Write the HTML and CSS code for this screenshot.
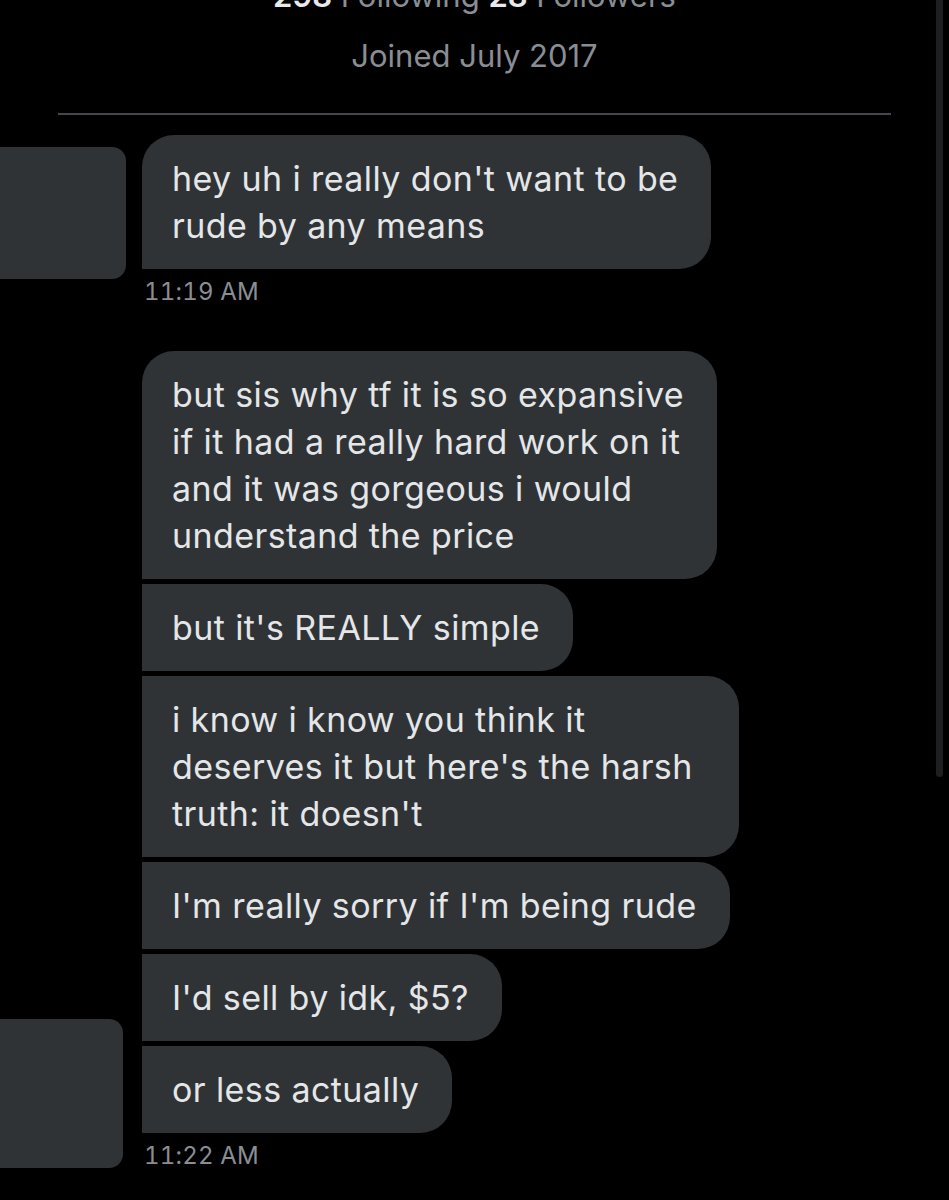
FILE: index.html
```html
<!DOCTYPE html>
<html lang="en">
<head>
<meta charset="utf-8">
<title>Messages</title>
<link rel="stylesheet" href="styles.css">
</head>
<body>
<div class="screen">
  <header class="profile">
    <p class="stats"><b>298</b> Following <b>28</b> Followers</p>
    <p class="joined">Joined July 2017</p>
  </header>
  <hr class="divider">

  <section class="thread">
    <div class="group">
      <div class="avatar-col"><div class="avatar avatar-a"></div></div>
      <div class="messages">
        <div class="bubble first">hey uh i really don't want to be<br>rude by any means</div>
        <div class="time">11:19 AM</div>
      </div>
    </div>

    <div class="group group-b">
      <div class="avatar-col"><div class="avatar avatar-b"></div></div>
      <div class="messages">
        <div class="bubble first">but sis why tf it is so expansive<br>if it had a really hard work on it<br>and it was gorgeous i would<br>understand the price</div>
        <div class="bubble">but it's REALLY simple</div>
        <div class="bubble wide">i know i know you think it<br>deserves it but here's the harsh<br>truth: it doesn't</div>
        <div class="bubble">I'm really sorry if I'm being rude</div>
        <div class="bubble">I'd sell by idk, $5?</div>
        <div class="bubble">or less actually</div>
        <div class="time">11:22 AM</div>
      </div>
    </div>
  </section>

  <div class="scroll-indicator"></div>
</div>
</body>
</html>
```

FILE: styles.css
```css
html, body {
  margin: 0;
  padding: 0;
  background: #000;
}

body {
  font-family: Inter, "Noto Sans", "Liberation Sans", sans-serif;
  color: #e4e6e8;
}

.screen {
  position: relative;
  width: 949px;
  height: 1200px;
  overflow: hidden;
}

/* profile footer above the thread */
.profile {
  text-align: center;
  color: #8a8e93;
  font-size: 31px;
  line-height: 40px;
}

.profile p {
  margin: 0;
}

.stats {
  margin-top: -24px !important;
}

.stats b {
  color: #e7e9ea;
  font-weight: 600;
}

.joined {
  margin-top: 20px !important;
}

.divider {
  margin: 37px 58px 0;
  border: 0;
  height: 2px;
  background: #44474c;
}

/* conversation */
.thread {
  padding-top: 20px;
  display: flex;
  flex-direction: column;
  gap: 45px;
}

.group {
  display: flex;
  gap: 16px;
}

.avatar-col {
  width: 126px;
  flex: none;
  display: flex;
  flex-direction: column;
  justify-content: flex-end;
}

.avatar {
  background: #2f3336;
  border-radius: 0 14px 14px 0;
}

.avatar-a {
  width: 126px;
  height: 132px;
  margin-bottom: 27px;
}

.avatar-b {
  width: 123px;
  height: 149px;
  margin-bottom: 2px;
}

.messages {
  display: flex;
  flex-direction: column;
  align-items: flex-start;
  gap: 5px;
}

.bubble {
  background: #2f3336;
  color: #e4e6e8;
  font-size: 34px;
  letter-spacing: 0.4px;
  line-height: 47px;
  padding: 20px 33px 20px 30px;
  border-radius: 0 32px 32px 0;
  white-space: nowrap;
}

.bubble.first {
  border-top-left-radius: 32px;
}

.bubble.wide {
  padding-right: 46px;
}

.time {
  margin-top: 4px;
  padding-left: 2px;
  color: #8a8e93;
  font-size: 24px;
  letter-spacing: 0.2px;
  font-variant-numeric: tabular-nums;
  line-height: 28px;
}

/* iOS-style scroll position indicator */
.scroll-indicator {
  position: absolute;
  top: 0;
  right: 6px;
  width: 7px;
  height: 777px;
  border-radius: 0 0 4px 4px;
  background: #1e1f21;
}
```
